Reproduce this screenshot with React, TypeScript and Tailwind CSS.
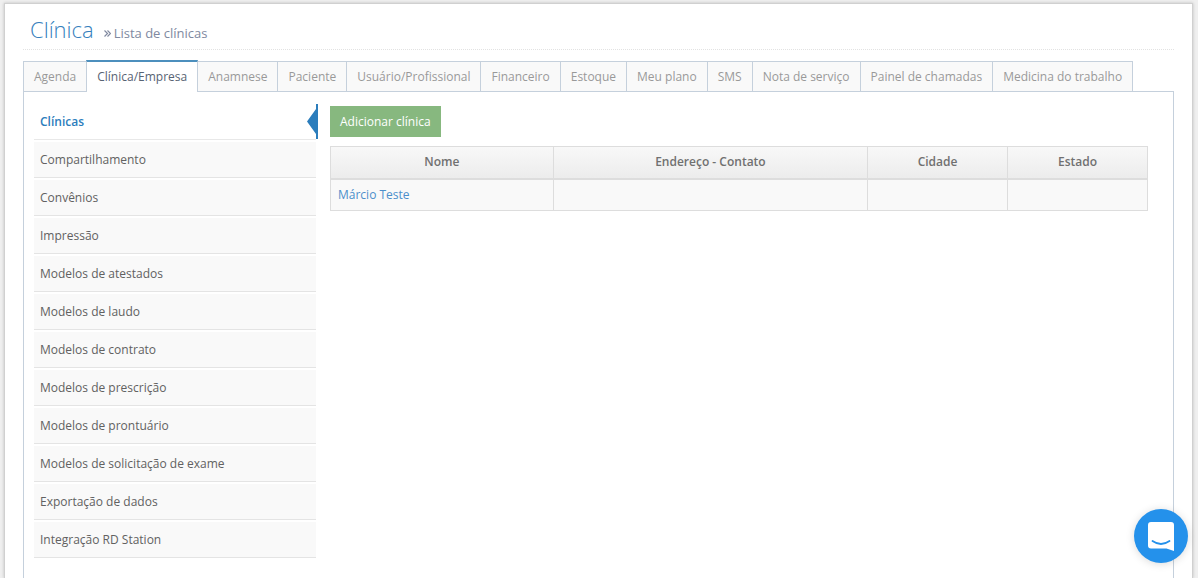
const tabs = [
  "Agenda",
  "Clínica/Empresa",
  "Anamnese",
  "Paciente",
  "Usuário/Profissional",
  "Financeiro",
  "Estoque",
  "Meu plano",
  "SMS",
  "Nota de serviço",
  "Painel de chamadas",
  "Medicina do trabalho",
];

const sections = [
  "Clínicas",
  "Compartilhamento",
  "Convênios",
  "Impressão",
  "Modelos de atestados",
  "Modelos de laudo",
  "Modelos de contrato",
  "Modelos de prescrição",
  "Modelos de prontuário",
  "Modelos de solicitação de exame",
  "Exportação de dados",
  "Integração RD Station",
];

const columns = [
  { label: "Nome", width: "w-3/11" },
  { label: "Endereço - Contato", width: "w-5/13" },
  { label: "Cidade", width: "w-auto" },
  { label: "Estado", width: "w-auto" },
];

function Header() {
  return (
    <header className="flex items-end gap-[10px] border-b border-dotted border-[#e2e2e2] pt-[9px] pb-1">
      <h1 className="pl-[7px] text-[22px] leading-8 font-light text-[#3580bd]">Clínica</h1>
      <p className="flex items-center gap-[3px] pb-[2px] text-[13px] leading-5 text-[#8089a0]">
        <svg className="size-[7px]" viewBox="0 0 7 7" fill="none" stroke="currentColor" strokeWidth="1.200" aria-hidden="true">
          <path d="M0.500 0.500L3.500 3.500L0.500 6.500M3.500 0.500L6.500 3.500L3.500 6.500" />
        </svg>
        Lista de clínicas
      </p>
    </header>
  );
}

function Tabs() {
  return (
    <nav aria-label="Configurações" className="flex">
      {tabs.map((tab, i) => (
        <a
          key={tab}
          href="#"
          aria-current={i === 1 ? "page" : undefined}
          className={
            i === 1
              ? "relative z-10 -mr-px -mb-px border-x border-t-2 border-x-[#c5d0dc] border-t-[#4c8fbd] bg-white px-[10px] pt-[7px] pb-[7px] leading-4 whitespace-nowrap text-[#576373]"
              : "mt-px -mr-px border border-b-0 border-[#c5d0dc] bg-[#f9f9f9] px-[10px] pt-[7px] pb-[6px] leading-4 whitespace-nowrap text-[#999999]"
          }
        >
          {tab}
        </a>
      ))}
    </nav>
  );
}

function Sidebar() {
  return (
    <nav aria-label="Seções" className="w-[284px] shrink-0">
      <ul>
        {sections.map((section, i) => (
          <li key={section} className="flex h-[38px] items-stretch pt-[2px]">
            {i === 0 ? (
              <a
                href="#"
                aria-current="page"
                className="relative mr-0.5 flex flex-1 items-center border-b border-[#e8e8e8] pl-[6px] font-semibold text-[#2b7dbc]"
              >
                {section}
                <svg className="absolute top-0 -right-0.5 h-[35px] w-[11px]" viewBox="0 0 11 35" aria-hidden="true">
                  <path d="M9 0H11V35H9V30L0 17.5L9 5Z" fill="#2b7dbc" />
                </svg>
              </a>
            ) : (
              <a
                href="#"
                className="mr-0.5 flex flex-1 items-center border-b border-[#e4e4e4] bg-[#f9f9f9] pl-[6px] text-[#616161]"
              >
                {section}
              </a>
            )}
          </li>
        ))}
      </ul>
    </nav>
  );
}

function Clinics() {
  return (
    <section className="min-w-0 flex-1">
      <button type="button" className="mt-1 mb-[9px] block h-[31px] bg-[#87b87f] px-[10px] text-white">
        Adicionar clínica
      </button>
      <table className="w-full table-fixed border-collapse border border-[#dddddd]">
        <thead>
          <tr className="bg-linear-to-b from-[#f8f8f8] to-[#ececec]">
            {columns.map((column) => (
              <th
                key={column.label}
                scope="col"
                className={`${column.width} h-8 border border-b-2 border-[#dddddd] text-center font-semibold text-[#707070]`}
              >
                {column.label}
              </th>
            ))}
          </tr>
        </thead>
        <tbody>
          <tr className="bg-[#f9f9f9]">
            <td className="h-8 border border-[#dddddd] px-[7px]">
              <a href="#" className="text-[#4c8fcb]">
                Márcio Teste
              </a>
            </td>
            <td className="border border-[#dddddd]" />
            <td className="border border-[#dddddd]" />
            <td className="border border-[#dddddd]" />
          </tr>
        </tbody>
      </table>
    </section>
  );
}

function ChatButton() {
  return (
    <button
      type="button"
      aria-label="Abrir chat"
      className="fixed right-[10px] bottom-[15px] z-20 flex size-[54px] items-center justify-center rounded-full bg-[#2491eb] shadow-[0_1px_8px_rgba(0,0,0,0.15)]"
    >
      <svg className="h-[29px] w-[26px]" viewBox="0 0 26 29" aria-hidden="true">
        <path d="M3 0H23Q26 0 26 3V29L18.500 26.500H3Q0 26.500 0 23.500V3Q0 0 3 0Z" fill="#fff" />
        <path d="M4.500 19Q13 25 21.500 19" fill="none" stroke="#2491eb" strokeWidth="1.800" strokeLinecap="round" />
      </svg>
    </button>
  );
}

export default function App() {
  return (
    <div className="flex min-h-screen flex-col bg-[#efefef] pt-[3px] pr-[5px] pl-1 font-['Open_Sans',sans-serif] text-[12px]">
      <main className="flex flex-1 flex-col border border-b-0 border-[#d0d0d0] bg-white px-[18px] shadow-[0_0_3px_rgba(0,0,0,0.2)]">
        <Header />
        <div className="mt-[10px] flex flex-1 flex-col">
          <Tabs />
          <div className="flex flex-1 gap-3 border border-b-0 border-[#c5d0dc] pt-[10px] pr-[25px] pl-[10px]">
            <Sidebar />
            <Clinics />
          </div>
        </div>
      </main>
      <ChatButton />
    </div>
  );
}
